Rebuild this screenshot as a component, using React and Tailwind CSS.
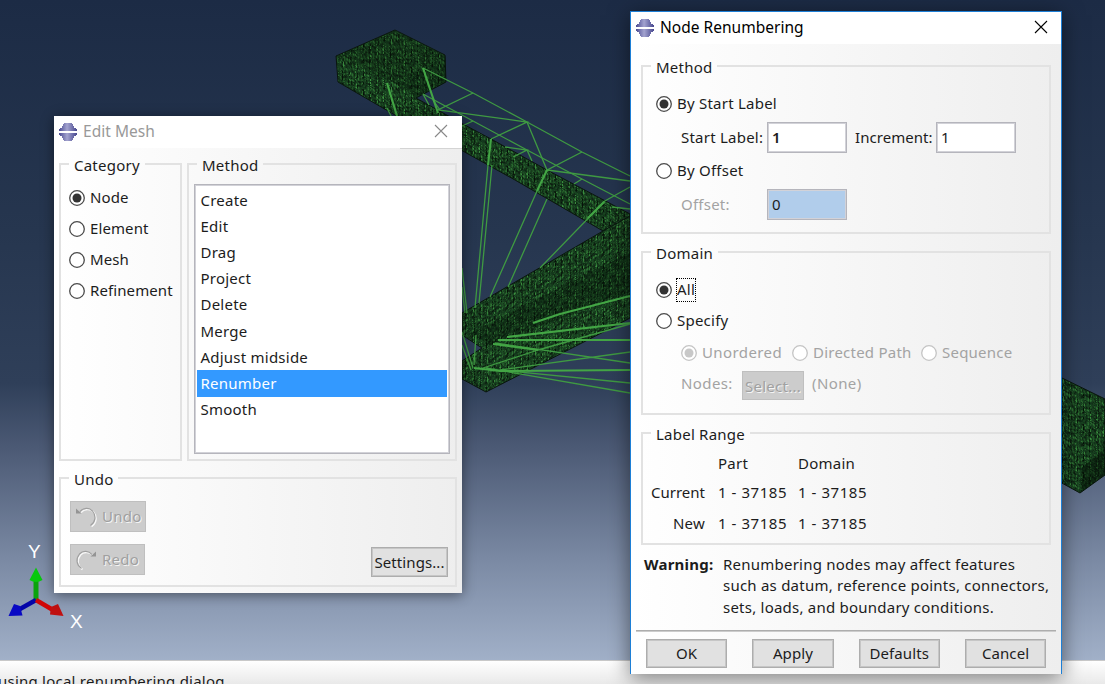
import React from "react";

/* Deterministic speckle used as the fill of dense mesh regions. */
function speckle(size, seed) {
  let s = seed;
  const rnd = () => {
    s = (s * 1103515245 + 12345) % 2147483648;
    return s / 2147483648;
  };
  const shades = ["#0c1a0e", "#184220", "#215a26", "#2d7432", "#3c9240", "#051007"];
  const cells = [];
  for (let y = 0; y < size; y += 2) {
    for (let x = 0; x < size; x += 1) {
      const h = rnd() < 0.6 ? 1 : 2;
      const dark = x % 3 === 0;
      const pick = dark ? (rnd() < 0.5 ? 5 : 1) : Math.floor(rnd() * 5);
      cells.push({ x, y: y + (rnd() < 0.3 ? 1 : 0), h, c: shades[pick] });
    }
  }
  return cells;
}
const CELLS = speckle(48, 7);

const THIN = [
  "M423 68L473 93L527 122L582 152L630 176",
  "M423 94L473 121L527 150L582 179L630 204",
  "M473 93L438 110L527 122L491 139M527 122L547 170L582 152M547 170L630 181",
  "M423 94L429 105M433 100L440 110M473 121L462 126M505 147L527 150L513 157M527 150L532 161M582 179L574 184",
  "M603 202L630 187M612 207L630 209M387 108L392 118",
  "M488 165L475 308M492 165L479 303M537 191L490 297M547 199L508 287M604 202L540 268",
  "M462 268L467 313M462 287L465 313M462 332L473 368M462 345L471 370M476 335L474 365",
  "M500 370L630 352M500 370L630 383M486 368L630 393M495 343L630 363M538 350L630 324M538 350L480 369",
];
const THICK = [
  "M423 68L438 113M387 83L397 116M491 139L488 165M547 170L537 191M604 202L588 218",
  "M533 323L560 314L630 296M507 337L630 323M498 340L630 340M493 344L538 350M474 368L500 371L630 370",
];

function MeshPattern({ id, transform }) {
  return (
    <pattern id={id} width="48" height="48" patternUnits="userSpaceOnUse" patternTransform={transform}>
      <rect width="48" height="48" fill="#12331a" />
      {CELLS.map((c, i) => (
        <rect key={i} x={c.x} y={c.y} width="1" height={c.h} fill={c.c} />
      ))}
    </pattern>
  );
}

function Viewport() {
  return (
    <svg className="block h-[660px] w-full shrink-0" viewBox="0 0 1105 660" preserveAspectRatio="none">
      <defs>
        <linearGradient id="sky" x1="0" y1="0" x2="0" y2="1">
          <stop offset="0" stopColor="#1c2b45" />
          <stop offset="0.35" stopColor="#26364f" />
          <stop offset="0.58" stopColor="#2f3f59" />
          <stop offset="0.68" stopColor="#4c5a75" />
          <stop offset="0.85" stopColor="#7b8aa4" />
          <stop offset="1" stopColor="#a1b0c8" />
        </linearGradient>
        <MeshPattern id="mesh" transform="skewY(28)" />
        <MeshPattern id="meshUp" transform="skewY(-29)" />
      </defs>
      <rect width="1105" height="660" fill="url(#sky)" />
      <g stroke="#0a160e" strokeWidth="1">
        <path d="M395 30L445 55L446 82L416 98L461 123L491 139L547 170L630 214V240L603 231L515 180L461 150L395 115L338 82L336 56Z" fill="url(#mesh)" />
        <path d="M630 216V318L617 325L486 392L462 379V361L482 348L462 335V313L603 231Z" fill="url(#meshUp)" />
        <path d="M1060 377L1105 399V475L1080 493L1060 482Z" fill="url(#mesh)" />
      </g>
      <path d="M1082 468L1105 448V475L1081 492Z" fill="#041006" opacity="0.5" />
      <path d="M336 57L395 31L445 56L396 84Z" fill="#041006" opacity="0.2" />
      <path d="M396 84L446 56V82L416 98Z" fill="#041006" opacity="0.3" />
      <path d="M470 333L630 252V292L490 345Z" fill="#041006" opacity="0.3" />
      <g fill="none" stroke="#3f9a42">
        {THIN.map((d) => <path key={d} d={d} strokeWidth="1.3" />)}
        {THICK.map((d) => <path key={d} d={d} strokeWidth="2.1" stroke="#43a645" />)}
      </g>
      <path d="M36 600V580" stroke="#0aa30c" strokeWidth="5" />
      <path d="M36 567.500L42.500 580Q36 584 29.500 580Z" fill="#08c80c" />
      <path d="M36 600L20 609" stroke="#0505a8" strokeWidth="4.500" />
      <path d="M14 604L20 606L22.500 615.500L8.500 616Z" fill="#0808c4" />
      <path d="M36 600L53 610" stroke="#d00606" strokeWidth="4.500" />
      <path d="M58 604L63.500 616L50 614.500L51 607Z" fill="#c01010" />
      <g fill="#fff" fontFamily="'Liberation Sans', sans-serif" fontSize="19" textAnchor="middle">
        <text x="34.500" y="558">Y</text>
        <text x="76.500" y="628">X</text>
      </g>
    </svg>
  );
}

function AppIcon() {
  return (
    <svg className="mb-px h-[18px] w-[18px] shrink-0" viewBox="0 0 18 18">
      <defs>
        <linearGradient id="orb" x1="0" x2="1" y1="0" y2="0">
          <stop offset="0" stopColor="#4b4b92" />
          <stop offset="0.45" stopColor="#a3a3cf" />
          <stop offset="1" stopColor="#47478e" />
        </linearGradient>
      </defs>
      <path d="M5 0H13V1H14V3H15V5H17V6H18V8H0V6H1V5H3V3H4V1H5ZM0 10H18V12H17V13H15V15H14V17H13V18H5V17H4V15H3V13H1V12H0Z" fill="url(#orb)" />
    </svg>
  );
}

function TitleBar({ title, active }) {
  return (
    <div className={`flex h-8 shrink-0 items-center bg-white pl-[5px] ${active ? "pr-[13px]" : "pr-[14px]"}`}>
      <AppIcon />
      <span className={`ml-1.5 grow pb-0.5 text-[15.5px] tracking-[0.02px] ${active ? "text-black" : "text-[#999999]"}`}>{title}</span>
      <svg className="mb-0.5 h-[14px] w-[14px]" viewBox="0 0 14 14" fill="none" stroke={active ? "#000" : "#888"} strokeWidth="1.100">
        <path d="M1 1L13 13M13 1L1 13" />
      </svg>
    </div>
  );
}

function Group({ title, className, children }) {
  return (
    <fieldset className={`min-w-0 border-2 border-[#e2e2e2] ${className}`}>
      <legend className="ml-2 h-6 px-[5px] pt-1 leading-[19px]">{title}</legend>
      {children}
    </fieldset>
  );
}

function Radio({ label, checked, disabled, focused }) {
  const ring = disabled ? "#c4c4c4" : "#4a4a4a";
  return (
    <span className={`flex items-center gap-[5px] whitespace-nowrap ${disabled ? "text-[#a3a3a3]" : ""}`}>
      <svg className="h-4 w-4 shrink-0" viewBox="0 0 16 16">
        <circle cx="8" cy="8" r="7.300" fill="#fff" stroke={ring} strokeWidth="1.300" />
        {checked && <circle cx="8" cy="8" r="4.500" fill={disabled ? "#c8c8c8" : "#333"} />}
      </svg>
      <span className={focused ? "-ml-px flex h-6 w-5 items-center justify-center border border-dotted border-black pb-0.5" : "pb-0.5"}>{label}</span>
    </span>
  );
}

function Field({ value, bold, shaded }) {
  return (
    <div className={`flex h-[31px] w-20 items-center border border-[#b5b5bc] pb-0.5 pl-1 shadow-[inset_0_0_0_1px_#d2d2d8] ${shaded ? "bg-[#b1cdeb]" : "bg-white"} ${bold ? "font-semibold" : ""}`}>
      {value}
    </div>
  );
}

const EMBOSS = "text-[#a0a0a0] [text-shadow:1px_1px_0_#f4f4f4]";

function HistoryButton({ label, flip, className }) {
  return (
    <div className={`flex items-center border border-[#bfbfbf] bg-[#cccccc] pl-1 ${EMBOSS} ${className}`}>
      <svg className="h-[22px] w-[22px] shrink-0" viewBox="0 0 22 22" fill="none">
        <g transform={flip ? "translate(22 0) scale(-1 1)" : undefined}>
          <path d="M5 5.500C8 2 14 1 17.500 5C21.500 10 20.500 16 15.500 19.500" stroke="#f8f8f8" strokeWidth="1.600" transform={flip ? "translate(-1 1)" : "translate(1 1)"} />
          <path d="M5 5.500C8 2 14 1 17.500 5C21.500 10 20.500 16 15.500 19.500" stroke="#a0a0a0" strokeWidth="1.200" />
          <path d="M1 2.500V7.500H6.500Z" fill="#949494" />
        </g>
      </svg>
      <span className="ml-[5px] pb-0.5">{label}</span>
    </div>
  );
}

function Button({ children, className }) {
  return <div className={`flex items-center justify-center border border-[#adadad] bg-[#e1e1e1] tracking-[0.1px] shadow-[inset_0_0_0_1px_#c6c6c6] ${className}`}>{children}</div>;
}

const METHODS = ["Create", "Edit", "Drag", "Project", "Delete", "Merge", "Adjust midside", "Renumber", "Smooth"];

function EditMesh() {
  return (
    <section className="absolute left-[54px] top-[116px] flex h-[477px] w-[408px] flex-col bg-gradient-to-r from-white to-[#eeeeee] shadow-[0_2px_12px_rgba(0,0,0,0.45)]">
      <TitleBar title="Edit Mesh" />
      <div className="h-px w-[62px] shrink-0 self-end bg-[#d4d4d4]" />
      <div className="flex grow flex-col gap-[5px] px-[5px] pt-[3px]">
        <div className="flex h-[309px] gap-[5px]">
          <Group title="Category" className="w-[123px]">
            <div className="flex flex-col pl-2 pt-1.5 tracking-[0.1px]">
              {["Node", "Element", "Mesh", "Refinement"].map((l, i) => (
                <div key={l} className="flex h-[31.2px] items-center"><Radio label={l} checked={i === 0} /></div>
              ))}
            </div>
          </Group>
          <Group title="Method" className="w-[270px]">
            <div className="ml-[5px] mt-2 h-[270px] w-[256px] border border-[#b5b5bc] bg-white p-0.5 shadow-[inset_0_0_0_1px_#d2d2d8]">
              {METHODS.map((m) => (
                <div key={m} className={`flex h-[26.2px] items-center pb-px pl-[3.5px] ${m === "Renumber" ? "bg-[#3399ff] text-white" : ""}`}>{m}</div>
              ))}
            </div>
          </Group>
        </div>
        <Group title="Undo" className="h-[121px] w-[398px]">
          <div className="flex justify-between pl-[9px] pr-[7px] pt-[11px]">
            <div className="flex flex-col gap-[12px]">
              <HistoryButton label="Undo" className="h-[31px] w-[76px]" />
              <HistoryButton label="Redo" flip className="h-[31px] w-[75px]" />
            </div>
            <Button className="mt-[46px] h-[30px] w-[77px]">Settings...</Button>
          </div>
        </Group>
      </div>
    </section>
  );
}

function NodeRenumbering() {
  return (
    <section className="absolute left-[630px] top-[11px] flex h-[663px] w-[432px] flex-col border border-b-0 border-[#1d7fd6] bg-gradient-to-r from-white to-[#eeeeee] shadow-[0_4px_20px_rgba(0,0,0,0.5)]">
      <TitleBar title="Node Renumbering" active />
      <div className="flex flex-col pl-2.5 pt-2.5">
        <Group title="Method" className="h-[180px] w-[410px]">
          <div className="flex flex-col pl-[13px] pt-2">
            <div className="flex h-[34px] items-center pt-px"><Radio label="By Start Label" checked /></div>
            <div className="flex h-[35px] items-center pl-[25px]">
              <span className="w-[86px] pb-0.5">Start Label:</span>
              <Field value="1" bold />
              <span className="ml-2 w-[81px] whitespace-nowrap pb-0.5 tracking-[0.05px]">Increment:</span>
              <Field value="1" />
            </div>
            <div className="flex h-8 items-center"><Radio label="By Offset" /></div>
            <div className="flex h-[35px] items-center pl-[25px]">
              <span className="w-[86px] pb-0.5 text-[#a3a3a3]">Offset:</span>
              <Field value="0" shaded />
            </div>
          </div>
        </Group>
        <Group title="Domain" className="mt-1.5 h-[175px] w-[410px]">
          <div className="flex flex-col pl-[13px] pt-[10px]">
            <div className="flex h-[31.5px] items-center"><Radio label="All" checked focused /></div>
            <div className="flex h-[31.5px] items-center"><Radio label="Specify" /></div>
            <div className="flex h-[31.5px] items-center pl-[25px]">
              <div className="w-[111px] tracking-[0.4px]"><Radio label="Unordered" checked disabled /></div>
              <div className="w-[129px]"><Radio label="Directed Path" disabled /></div>
              <Radio label="Sequence" disabled />
            </div>
            <div className="flex h-[31.5px] items-center pl-[25px] text-[#a3a3a3]">
              <span className="w-[61px] pb-0.5 tracking-[0.4px]">Nodes:</span>
              <div className={`mt-[3px] flex h-[29px] w-[62px] items-center justify-center border border-[#bfbfbf] bg-[#cccccc] ${EMBOSS}`}>Select...</div>
              <span className="ml-2 pb-0.5 tracking-[0.4px]">(None)</span>
            </div>
          </div>
        </Group>
        <Group title="Label Range" className="mt-1.5 h-[124px] w-[410px]">
          <div className="grid grid-cols-[62px_67px_auto] grid-rows-[27px_31px_31px] items-center gap-x-[13px] pt-1">
            <span />
            <span>Part</span>
            <span>Domain</span>
            <span className="text-right tracking-normal">Current</span>
            <span className="whitespace-nowrap tracking-[0.55px]">1 - 37185</span>
            <span className="tracking-[0.55px]">1 - 37185</span>
            <span className="text-right">New</span>
            <span className="whitespace-nowrap tracking-[0.55px]">1 - 37185</span>
            <span className="tracking-[0.55px]">1 - 37185</span>
          </div>
        </Group>
        <div className="mt-[9px] flex pl-[3px] leading-[21.3px]">
          <span className="w-[79px] shrink-0 font-bold">Warning:</span>
          <p className="whitespace-nowrap">
            Renumbering nodes may affect features<br />
            such as datum, reference points, connectors,<br />
            sets, loads, and boundary conditions.
          </p>
        </div>
      </div>
      <div className="mx-[5px] mt-[12px] h-0.5 border-t border-[#adadad] bg-[#cccccc]" />
      <div className="flex gap-[25px] pl-[15px] pt-[7px]">
        {["OK", "Apply", "Defaults", "Cancel"].map((b) => (
          <Button key={b} className="h-[29px] w-[81.3px]">{b}</Button>
        ))}
      </div>
    </section>
  );
}

export default function App() {
  return (
    <main className="relative flex h-[684px] w-[1105px] flex-col overflow-hidden font-['Noto_Sans',sans-serif] text-[15px] leading-5 tracking-[0.23px] text-[#1c1c1c]">
      <Viewport />
      <footer className="h-6 border-t border-[#c9c9c9] bg-gradient-to-b from-white to-[#e9e9e9] pt-2.5">
        <span className="-ml-0.5 whitespace-nowrap">using local renumbering dialog</span>
      </footer>
      <EditMesh />
      <NodeRenumbering />
    </main>
  );
}
